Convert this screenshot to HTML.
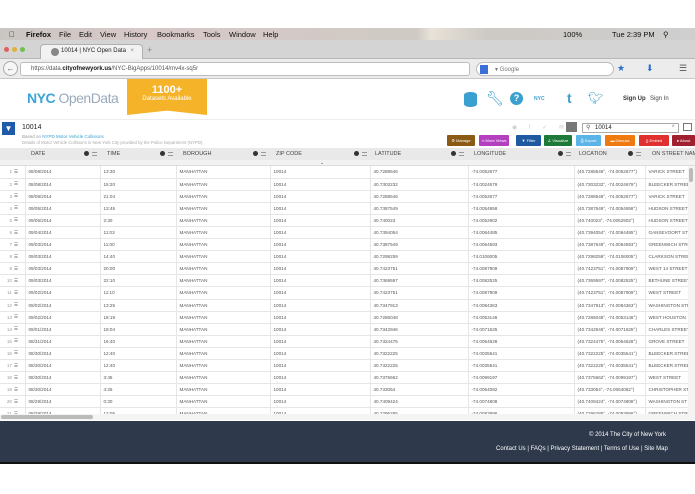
<!DOCTYPE html>
<html><head><meta charset="utf-8"><style>
*{margin:0;padding:0;box-sizing:border-box}
body{width:695px;height:494px;overflow:hidden;background:#fff;font-family:"Liberation Sans",sans-serif;position:relative}
.a{position:absolute}
.menubar{top:28px;left:0;width:695px;height:12px;background:linear-gradient(90deg,#c9c6c2,#d8c8c8 20%,#cfcac4 60%,#e8e2d8 62%,#cdc9c4 70%,#cfcfcf);font-size:7.5px;color:#111}
.menubar span{position:absolute;top:1.5px}
.tabbar{top:40px;left:0;width:695px;height:19px;background:#d4d4d4;border-bottom:1px solid #b8b8b8}
.tab{top:44px;left:40px;width:103px;height:15px;background:#f2f2f2;border-radius:4px 4px 0 0;border:1px solid #b0b0b0;border-bottom:none;font-size:6px;color:#222;padding:3px 0 0 20px}
.urlbar{top:59px;left:0;width:695px;height:20px;background:#ececec;border-bottom:1px solid #c8c8c8}
.url{top:62px;left:20px;width:450px;height:14px;background:#fff;border:1px solid #bdbdbd;border-radius:3px;font-size:6px;color:#555;padding:3px 0 0 10px}
.gs{top:62px;left:476px;width:138px;height:14px;background:#fff;border:1px solid #bdbdbd;border-radius:7px;font-size:6px;color:#777;padding:3px 0 0 18px}
.btn{top:135px;height:11px;color:#fff;font-size:4px;line-height:11px;text-align:center;border-radius:1px;white-space:nowrap;overflow:hidden}
table{border-collapse:collapse;font-size:4.6px;color:#555}
td{height:12.1px;border-bottom:1px solid #e6e6e6;border-right:1px solid #e6e6e6;padding-left:3px;white-space:nowrap;overflow:hidden}
.ic{display:inline-block;width:5px;height:5px;border-radius:50%;background:#333;margin-right:3px;vertical-align:middle}
.ln{display:inline-block;width:5px;height:4px;border-top:1px solid #999;border-bottom:1px solid #999;vertical-align:middle;position:relative}
.hd span{white-space:nowrap}
</style></head><body>
<div class="a menubar">
<span style="left:9px">&#63743;</span>
<span style="left:26px;font-weight:bold">Firefox</span>
<span style="left:59px">File</span><span style="left:79px">Edit</span><span style="left:100px">View</span>
<span style="left:124px">History</span><span style="left:157px">Bookmarks</span><span style="left:203px">Tools</span>
<span style="left:229px">Window</span><span style="left:263px">Help</span>
<span style="left:563px">100%</span><span style="left:612px">Tue 2:39 PM</span><span style="left:663px">&#9906;</span>
</div>
<div class="a tabbar"></div>
<div class="a" style="top:47px;left:4px;width:5px;height:5px;border-radius:50%;background:#e0605a"></div>
<div class="a" style="top:47px;left:12px;width:5px;height:5px;border-radius:50%;background:#e0b040"></div>
<div class="a" style="top:47px;left:20px;width:5px;height:5px;border-radius:50%;background:#70c050"></div>
<div class="a tab">10014 | NYC Open Data<span style="position:absolute;left:10px;top:3px;width:8px;height:8px;border-radius:50%;background:#888"></span><span style="position:absolute;right:8px;top:3px;color:#888">×</span></div>
<div class="a" style="top:45px;left:147px;font-size:9px;color:#888">+</div>
<div class="a urlbar"></div>
<div class="a" style="top:61px;left:3px;width:15px;height:15px;border-radius:50%;border:1px solid #aaa;background:#f6f6f6;font-size:8px;color:#666;text-align:center;line-height:13px">&#8592;</div>
<div class="a url">https://data.<b style="color:#111">cityofnewyork.us</b>/NYC-BigApps/10014/mv4x-sq5r</div>
<div class="a gs"><span style="position:absolute;left:3px;top:2px;width:8px;height:9px;background:#3a70d8"></span>▾ Google</div>
<div class="a" style="top:63px;left:617px;font-size:9px;color:#2a6fd0">★</div>
<div class="a" style="top:63px;left:646px;font-size:9px;color:#2a6fd0">⬇</div>
<div class="a" style="top:63px;left:679px;font-size:9px;color:#555">☰</div>
<div class="a" style="top:90px;left:27px;font-size:14px;letter-spacing:-0.5px"><b style="color:#3aa5d6">NYC</b> <span style="color:#9ab">OpenData</span></div>
<div class="a" style="top:79px;left:127px;width:80px;height:36px;background:#f5b32a;clip-path:polygon(0 0,100% 0,100% 100%,50% 88%,0 100%);color:#fff;text-align:center">
<div style="font-size:11px;font-weight:bold;margin-top:5px">1100+</div><div style="font-size:6px">Datasets Available</div></div>
<div class="a" style="top:92px;left:464px;width:13px;height:15px;background:#3aa0d0;border-radius:6px/3px"></div>
<div class="a" style="top:90px;left:486px;font-size:14px;color:#3aa0d0">🔧︎</div>
<div class="a" style="top:92px;left:510px;width:13px;height:13px;border-radius:50%;background:#3aa0d0;color:#fff;font-size:9px;font-weight:bold;text-align:center;line-height:13px">?</div>
<div class="a" style="top:96px;left:534px;font-size:5px;font-weight:bold;color:#3aa0d0">NYC</div>
<div class="a" style="top:90px;left:567px;font-size:14px;font-weight:bold;color:#3aa0d0">t</div>
<div class="a" style="top:91px;left:588px;font-size:12px;color:#3aa0d0">🐦︎</div>
<div class="a" style="top:96px;left:623px;font-size:6px;color:#333;font-weight:bold">Sign Up</div>
<div class="a" style="top:96px;left:650px;font-size:6px;color:#444">Sign In</div>
<div class="a" style="top:119px;left:0;width:695px;height:1px;background:#eee"></div>
<div class="a" style="top:122px;left:2px;width:13px;height:13px;background:#1f5ba8;color:#fff;font-size:8px;text-align:center;line-height:13px">▼</div>
<div class="a" style="top:124px;left:22px;font-size:7px;color:#222">10014</div>
<div class="a" style="top:134px;left:22px;font-size:4.5px;color:#999">Based on <span style="color:#3aa0d0">NYPD Motor Vehicle Collisions</span></div>
<div class="a" style="top:140px;left:22px;font-size:4.3px;color:#aaa">Details of Motor Vehicle Collisions in New York City provided by the Police Department (NYPD).</div>
<div class="a" style="top:124px;left:512px;font-size:6px;color:#ccc;letter-spacing:5px">◉ f ✓ ✉</div>
<div class="a" style="top:122px;left:566px;width:11px;height:10px;background:#777"></div>
<div class="a" style="top:123px;left:582px;width:97px;height:10px;border:1px solid #aaa;font-size:6px;color:#222;padding:1px 0 0 12px">10014<span style="position:absolute;left:3px;top:0;color:#555">⚲</span><span style="position:absolute;right:3px;top:0;color:#999">×</span></div>
<div class="a" style="top:123px;left:683px;width:9px;height:8px;border:1px solid #777"></div>
<div class="a btn" style="left:447px;width:28px;background:#8b5a14">⚙ Manage</div>
<div class="a btn" style="left:479px;width:30px;background:#b43fbf">∞ More Views</div>
<div class="a btn" style="left:516px;width:25px;background:#1f5aa0">▼ Filter</div>
<div class="a btn" style="left:544px;width:28px;background:#1e7a38">∠ Visualize</div>
<div class="a btn" style="left:576px;width:25px;background:#5ab4e5">⎙ Export</div>
<div class="a btn" style="left:605px;width:30px;background:#f07a10">▬ Discuss</div>
<div class="a btn" style="left:639px;width:30px;background:#e03030">{} Embed</div>
<div class="a btn" style="left:672px;width:23px;background:#a02030">● About</div>
<div class="a" style="top:148px;left:0;width:695px;height:12px;background:#e9e9e9"></div>
<div class="a" style="top:160px;left:0;width:695px;height:6px;background:#f2f2f2;border-bottom:1px solid #ddd"></div>
<div class="a" style="top:160px;left:320px;font-size:5px;color:#555">⌄</div>
<div class="a hd" style="top:148px;left:0;width:695px;height:12px;font-size:5.5px;color:#444;overflow:hidden">
<span class="a" style="left:31px;top:3px">DATE</span><span class="a" style="left:84px;top:3px"><i class="ic"></i><i class="ln"></i></span>
<span class="a" style="left:107px;top:3px">TIME</span><span class="a" style="left:160px;top:3px"><i class="ic"></i><i class="ln"></i></span>
<span class="a" style="left:183px;top:3px">BOROUGH</span><span class="a" style="left:253px;top:3px"><i class="ic"></i><i class="ln"></i></span>
<span class="a" style="left:276px;top:3px">ZIP CODE</span><span class="a" style="left:354px;top:3px"><i class="ic"></i><i class="ln"></i></span>
<span class="a" style="left:375px;top:3px">LATITUDE</span><span class="a" style="left:451px;top:3px"><i class="ic"></i><i class="ln"></i></span>
<span class="a" style="left:474px;top:3px">LONGITUDE</span><span class="a" style="left:558px;top:3px"><i class="ic"></i><i class="ln"></i></span>
<span class="a" style="left:579px;top:3px">LOCATION</span><span class="a" style="left:628px;top:3px"><i class="ic"></i><i class="ln"></i></span>
<span class="a" style="left:652px;top:3px">ON STREET NAME</span>
</div>
<div class="a" style="top:166px;left:0;width:688px;height:248px;overflow:hidden">
<table style="width:700px;table-layout:fixed">
<colgroup><col style="width:14px"><col style="width:11px"><col style="width:75px"><col style="width:76px"><col style="width:94px"><col style="width:100px"><col style="width:98px"><col style="width:106px"><col style="width:71px"><col style="width:55px"></colgroup>
<tbody id="tb"></tbody></table></div>
<div class="a" style="top:166px;left:688px;width:7px;height:248px;background:#f4f4f4"></div>
<div class="a" style="top:168px;left:689px;width:4px;height:14px;background:#bbb;border-radius:2px"></div>
<div class="a" style="top:414px;left:0;width:695px;height:6px;background:#f4f4f4"></div>
<div class="a" style="top:415px;left:1px;width:92px;height:4px;background:#bbb;border-radius:2px"></div>
<div class="a" style="top:421px;left:0;width:695px;height:41px;background:#2e3a4b"></div>
<div class="a" style="top:462px;left:0;width:695px;height:2px;background:#111"></div>
<div class="a" style="top:432px;left:589px;font-size:6px;color:#fff">© 2014 The City of New York</div>
<div class="a" style="top:446px;left:496px;font-size:6px;color:#fff">Contact Us | FAQs | Privacy Statement | Terms of Use | Site Map</div>
<script>
var d=[["08/08/2014","13:30","40.7288546","-74.0052677","VARICK STREET"],["08/08/2014","15:20","40.7303232","-74.0024679","BLEECKER STREET"],["08/08/2014","21:04","40.7288546","-74.0052677","VARICK STREET"],["09/05/2014","13:45","40.7387549","-74.0054958","HUDSON STREET"],["09/05/2014","2:30","40.740023","-74.0052902","HUDSON STREET"],["09/04/2014","11:03","40.7394054","-74.0064485","GANSEVOORT ST"],["09/03/2014","11:00","40.7387549","-74.0064593","GREENWICH STREET"],["09/03/2014","14:40","40.7298259","-74.0106005","CLARKSON STREET"],["09/03/2014","20:00","40.7423751","-74.0087909","WEST 14 STREET"],["09/03/2014","22:10","40.7369597","-74.0082525","BETHUNE STREET"],["09/02/2014","11:10","40.7423751","-74.0087909","WEST STREET"],["09/02/2014","13:25","40.7347913","-74.0084363","WASHINGTON STREET"],["09/02/2014","18:19","40.7286048","-74.0053146","WEST HOUSTON"],["09/01/2014","18:04","40.7342946","-74.0071625","CHARLES STREET"],["08/31/2014","16:40","40.7324475","-74.0054628","GROVE STREET"],["08/30/2014","12:40","40.7322225","-74.0035541","BLEECKER STREET"],["08/30/2014","12:40","40.7322225","-74.0035541","BLEECKER STREET"],["08/30/2014","3:45","40.7375662","-74.0099197","WEST STREET"],["08/30/2014","4:25","40.733054","-74.0064082","CHRISTOPHER ST"],["08/29/2014","0:30","40.7409424","-74.0074808","WASHINGTON ST"],["08/29/2014","12:05","40.7296285","-74.0083996","GREENWICH STREET"]];
var h="";d.forEach(function(r,i){h+='<tr><td style="border-right:none;color:#999;text-align:right;padding-right:2px">'+(i+1)+'</td><td style="color:#444;padding-left:0">☰</td><td>'+r[0]+'</td><td>'+r[1]+'</td><td>MANHATTAN</td><td>10014</td><td>'+r[2]+'</td><td>'+r[3]+'</td><td>('+r[2]+'°, '+r[3]+'°)</td><td>'+r[4]+'</td></tr>'});
document.getElementById("tb").innerHTML=h;
</script>
</body></html>
